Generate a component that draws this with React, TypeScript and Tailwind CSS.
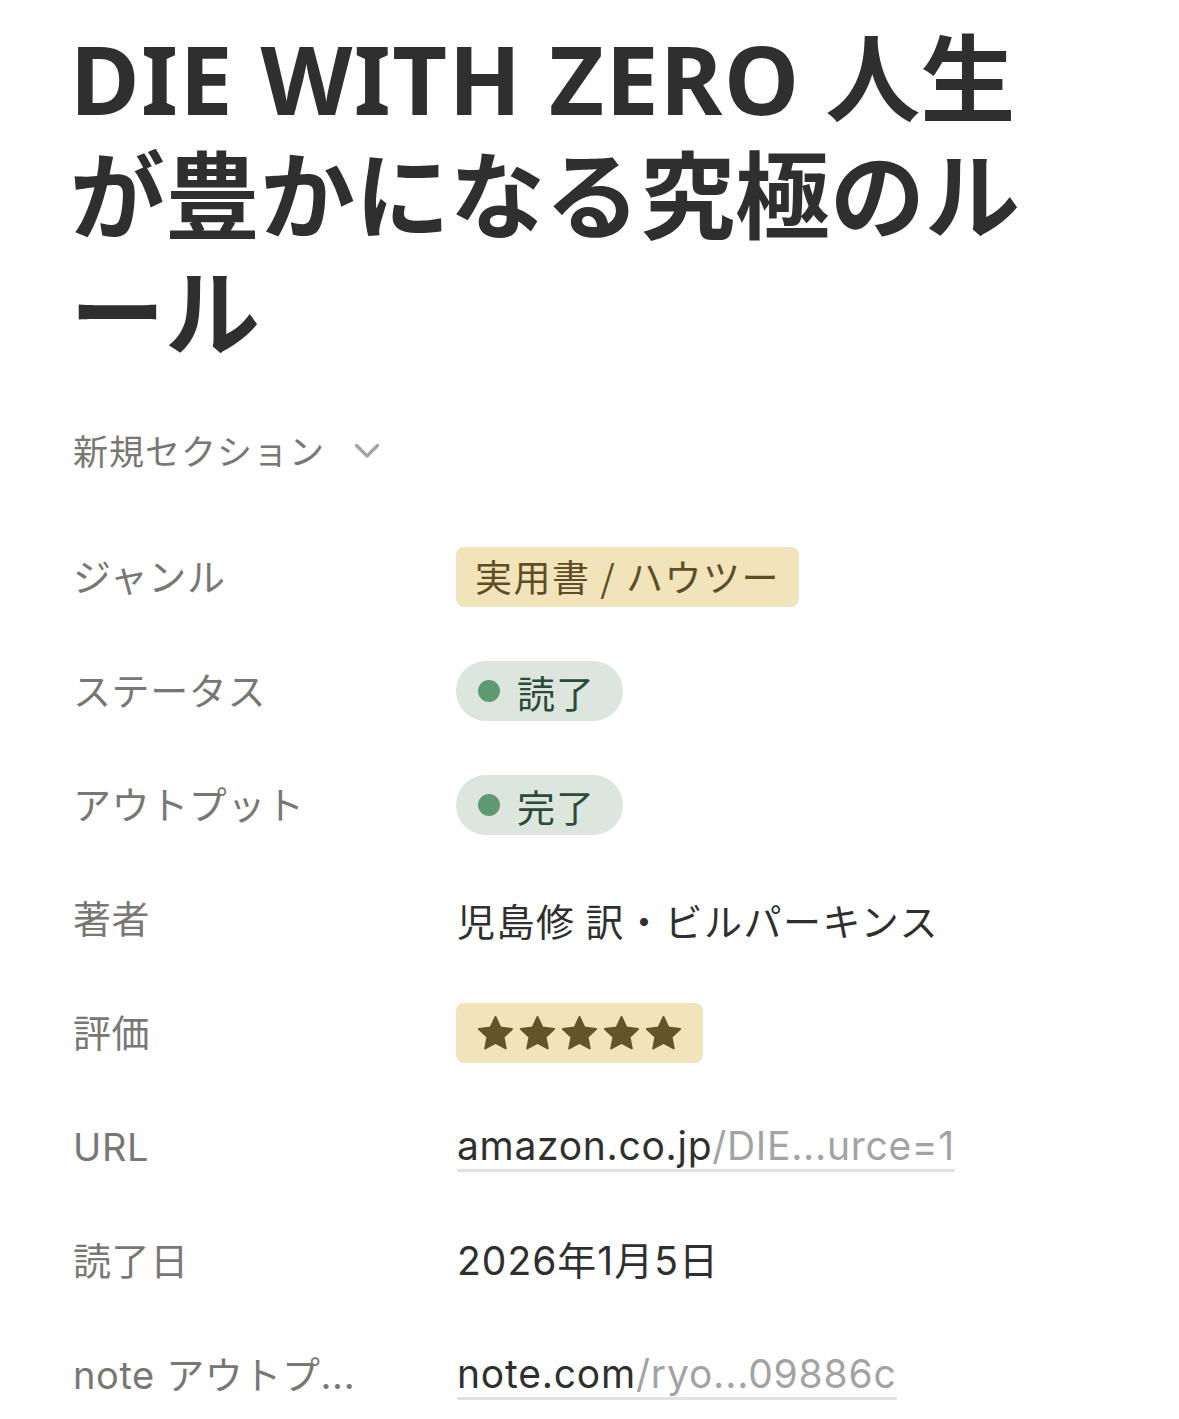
import React from "react";

function Row({ label, children }: { label: React.ReactNode; children: React.ReactNode }) {
  return (
    <div className="flex items-center h-[114px]">
      <div className="w-[384px] shrink-0 text-[38px] tracking-[0.6px] text-[#787774] leading-none whitespace-nowrap font-['Inter','Noto_Sans_CJK_JP',sans-serif]">
        {label}
      </div>
      <div className="flex items-center">{children}</div>
    </div>
  );
}

function Star() {
  return (
    <svg width="39" height="37" viewBox="0 0 24 23" className="block">
      <path
        d="M12 1.2l3.1 6.6 7.2.9-5.3 5 1.4 7.1L12 17.3l-6.4 3.5L7 13.7l-5.3-5 7.2-.9z"
        fill="#64542a"
        stroke="#64542a"
        strokeWidth="1.2"
        strokeLinejoin="round"
      />
    </svg>
  );
}

function Pill({ text }: { text: string }) {
  return (
    <div className="h-[60px] flex items-center pl-[22px] pr-[28px] rounded-full bg-[#dce6de] -ml-[1px]">
      <span className="w-[22px] h-[22px] rounded-full bg-[#5f9a72]" />
      <span className="ml-[17px] text-[38px] tracking-[1px] text-[#2d4b37] font-['Noto_Sans_CJK_JP',sans-serif]">{text}</span>
    </div>
  );
}

export default function App() {
  return (
    <div className="bg-white min-h-[1419px] w-[1179px] pl-[70px] pt-[20px] font-['Noto_Sans_CJK_JP',sans-serif]">
      <h1 className="w-[1000px] text-[95px] leading-[117px] font-bold text-[#2f2f2f] font-['Noto_Sans','Noto_Sans_CJK_JP',sans-serif]">
        <span className="tracking-[1.5px]">DIE WITH ZERO</span> 人生が豊かになる究極のルール
      </h1>

      <div className="mt-[54px] h-[50px] flex items-center pl-[3px]">
        <span className="text-[35px] text-[#787774] tracking-[1px]">新規セクション</span>
        <svg width="36" height="36" viewBox="0 0 24 24" className="ml-[24px]" fill="none" stroke="#a5a5a3" strokeWidth="2.2" strokeLinecap="round" strokeLinejoin="round">
          <path d="M5 9l7 7 7-7" />
        </svg>
      </div>

      <div className="mt-[45px] pl-[3px]">
        <Row label="ジャンル">
          <div className="h-[60px] flex items-center px-[19px] rounded-[8px] bg-[#f1e4bb] text-[#5f4e25] text-[37px] tracking-[1.5px] -ml-[1px]">
            実用書 / ハウツー
          </div>
        </Row>
        <Row label="ステータス">
          <Pill text="読了" />
        </Row>
        <Row label="アウトプット">
          <Pill text="完了" />
        </Row>
        <Row label="著者">
          <span className="text-[38px] tracking-[1.5px] text-[#2f2f2f]">児島修 訳・ビルパーキンス</span>
        </Row>
        <Row label="評価">
          <div className="h-[60px] flex items-center px-[20px] gap-[3px] rounded-[8px] bg-[#f1e4bb] -ml-[1px]">
            <Star />
            <Star />
            <Star />
            <Star />
            <Star />
          </div>
        </Row>
        <Row label="URL">
          <span className="text-[39px] tracking-[0.7px] leading-[46px] border-b-[3px] border-[#e3e2e0] text-[#2f2f2f] font-['Inter','Noto_Sans_CJK_JP',sans-serif]">
            amazon.co.jp<span className="text-[#a3a3a3]">/DIE...urce=1</span>
          </span>
        </Row>
        <Row label="読了日">
          <span className="text-[39px] tracking-[1px] text-[#2f2f2f] font-['Inter','Noto_Sans_CJK_JP',sans-serif]">2026年1月5日</span>
        </Row>
        <Row label="note アウトプ...">
          <span className="text-[39px] tracking-[0.8px] leading-[46px] border-b-[3px] border-[#e3e2e0] text-[#2f2f2f] font-['Inter','Noto_Sans_CJK_JP',sans-serif]">
            note.com<span className="text-[#a3a3a3]">/ryo...09886c</span>
          </span>
        </Row>
      </div>
    </div>
  );
}
